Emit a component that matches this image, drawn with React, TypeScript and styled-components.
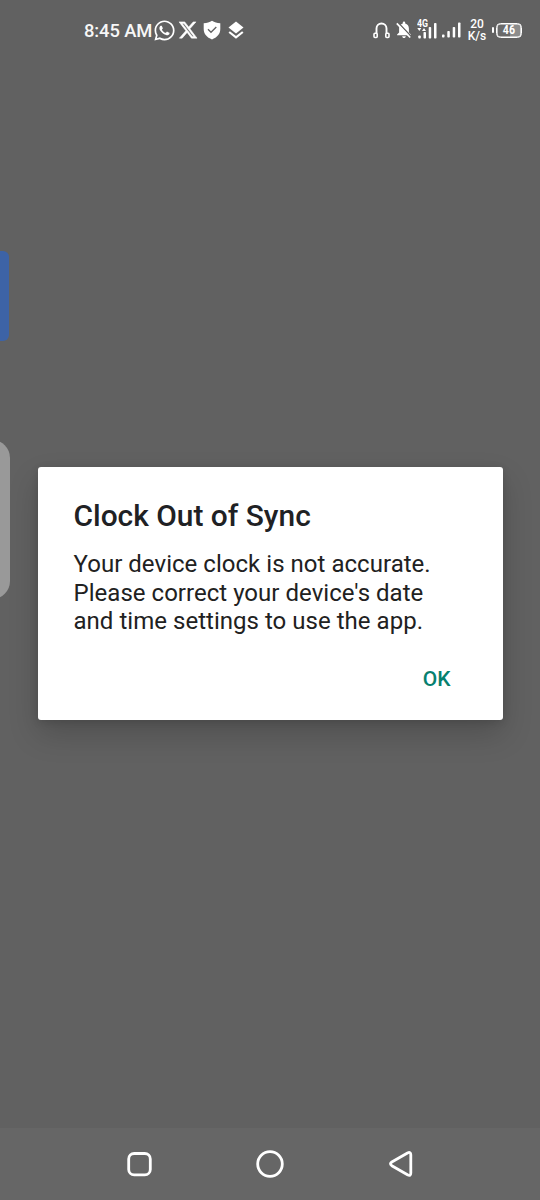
import React from "react";
import styled, { createGlobalStyle } from "styled-components";
import { FaWhatsapp } from "react-icons/fa";
import { FaXTwitter } from "react-icons/fa6";

const GlobalStyle = createGlobalStyle`
  body {
    margin: 0;
    background: #616161;
    font-family: Roboto, "Liberation Sans", sans-serif;
  }
`;

const Screen = styled.div`
  position: relative;
  display: flex;
  flex-direction: column;
  width: 540px;
  height: 1200px;
  overflow: hidden;
  background: #616161;
`;

const StatusBar = styled.header`
  display: flex;
  align-items: center;
  justify-content: space-between;
  box-sizing: border-box;
  height: 60px;
  padding: 0 18px 0 84px;
  color: #fff;
  svg {
    display: block;
    flex: none;
  }
`;

const StatusGroup = styled.div`
  display: flex;
  align-items: center;
`;

const Item = styled.span<{ $gap: number }>`
  display: flex;
  margin-left: ${({ $gap }) => $gap}px;
`;

const Time = styled.span`
  width: 70px;
  padding-top: 2px;
  font-size: 18.4px;
  font-weight: 500;
  line-height: 22px;
  letter-spacing: -0.1px;
  white-space: nowrap;
  color: #f7f7f7;
`;

const Signal = styled.div`
  display: flex;
  flex-direction: column;
  width: 21px;
  height: 21px;
  margin-left: 5px;
  margin-bottom: 3px;
`;

const NetworkType = styled.span`
  height: 4.5px;
  font-size: 10px;
  font-weight: 700;
  line-height: 11px;
  transform: scaleX(0.88);
  transform-origin: left;
`;

const Speed = styled.div`
  width: 22px;
  margin-left: 5px;
  font-size: 12px;
  font-weight: 500;
  line-height: 12px;
  text-align: center;
  white-space: nowrap;
`;

const Battery = styled.div`
  display: flex;
  align-items: center;
  margin-left: 4px;
`;

const BatteryTip = styled.span`
  width: 2px;
  height: 6px;
  margin-right: 2px;
  border-radius: 1px;
  background: #fff;
`;

const BatteryBody = styled.span`
  display: flex;
  align-items: center;
  justify-content: center;
  box-sizing: border-box;
  width: 26px;
  height: 15px;
  border: 1px solid #fff;
  border-radius: 4.5px;
  background: linear-gradient(90deg, #6a6a6a 54%, #8c8c8c 54%);
  box-shadow: inset 0 0 0 0.6px #fff;
`;

const BatteryLevel = styled.span`
  font-size: 12px;
  font-weight: 700;
  line-height: 12px;
  transform: scaleX(0.88);
`;

const Content = styled.main`
  flex: 1;
  display: flex;
  align-items: flex-start;
  justify-content: center;
  padding-top: 407px;
`;

const Dialog = styled.section`
  display: flex;
  flex-direction: column;
  box-sizing: border-box;
  width: 465px;
  height: 253px;
  padding: 31px 36px 0;
  border-radius: 3px;
  background: #fff;
  box-shadow: 0 14px 30px rgba(0, 0, 0, 0.18), 0 2px 8px rgba(0, 0, 0, 0.12);
`;

const Title = styled.h1`
  margin: 0;
  font-size: 29.9px;
  font-weight: 500;
  line-height: 36px;
  color: #202124;
  white-space: nowrap;
`;

const Message = styled.p`
  margin: 16px 0 0;
  font-size: 24px;
  line-height: 28.5px;
  letter-spacing: 0.03px;
  color: #212121;
  white-space: nowrap;
`;

const Actions = styled.div`
  display: flex;
  justify-content: flex-end;
  margin-top: 25px;
  padding-right: 16px;
`;

const ActionButton = styled.button`
  padding: 0;
  border: 0;
  background: none;
  font: 500 21px/36px Roboto, "Liberation Sans", sans-serif;
  color: #07806f;
`;

const NavBar = styled.nav`
  display: flex;
  align-items: center;
  justify-content: space-between;
  box-sizing: border-box;
  height: 72px;
  padding: 0 124px;
  background: #666;
`;

const EdgeHandle = styled.div<{ $top: number; $width: number; $height: number; $radius: number; $color: string }>`
  position: absolute;
  left: -20px;
  top: ${({ $top }) => $top}px;
  width: ${({ $width }) => $width + 20}px;
  height: ${({ $height }) => $height}px;
  border-radius: ${({ $radius }) => `0 ${$radius}px ${$radius}px 0`};
  background: ${({ $color }) => $color};
`;

const ShieldIcon = () => (
  <svg width="18" height="20" viewBox="0 0 18 20">
    <path d="M9 .7C11.5 2.5 14 3 17.3 3.2V9c0 5-3.2 8.4-8.3 10.4C3.9 17.4.7 14 .7 9V3.2C4 3 6.5 2.5 9 .7Z" fill="#fff" />
    <path d="m5 9.300 3 3 5.300-5.300" fill="none" stroke="#616161" strokeWidth="1.300" />
  </svg>
);

const LayersIcon = () => (
  <svg width="16" height="18" viewBox="0 0 16 18">
    <path d="M8 .5 15.500 6.600 8 12.500.5 6.600Z" fill="#fff" />
    <path d="m1.200 11 6.800 5.300 6.800-5.300" fill="none" stroke="#fff" strokeWidth="2.200" />
  </svg>
);

const HeadphonesIcon = () => (
  <svg width="17" height="17" viewBox="0 0 17 17" fill="none" stroke="#fff">
    <path d="M3.500 11.500V6.500a5 5 0 0 1 10 0v5" strokeWidth="1.900" />
    <rect x="1" y="11.200" width="3.200" height="4.300" rx="1" strokeWidth="1.600" />
    <rect x="12.800" y="11.200" width="3.200" height="4.300" rx="1" strokeWidth="1.600" />
  </svg>
);

const BellOffIcon = () => (
  <svg width="16" height="18" viewBox="0 0 16 18">
    <path d="M6.800 2.500V1.600a1.200 1.200 0 0 1 2.400 0v.9c2.300.6 3.700 2.500 3.700 5v4l2 2v.8H1.100v-.8l2-2v-4c0-2.500 1.400-4.400 3.700-5ZM6.200 15.200h3.600c0 2.400-3.600 2.400-3.600 0Z" fill="#fff" />
    <path d="m2 1.500 13.500 14.300" stroke="#616161" strokeWidth="1.500" />
    <path d="m.8 2.300 13.400 14.200" stroke="#fff" strokeWidth="1.700" />
  </svg>
);

const MobileSignal = () => (
  <svg width="21" height="16" viewBox="0 0 21 16" fill="#fff">
    <path d="M.3 5 2.300 8l2-3ZM5 8l2-3 2 3Z" />
    <rect x="1.300" y="12.500" width="2.500" height="3" rx=".8" />
    <rect x="6.500" y="9" width="2.500" height="6.500" rx=".8" />
    <rect x="11.700" y="4" width="2.500" height="11.500" rx=".8" />
    <rect x="17" y="0" width="2.500" height="15.500" rx=".8" />
  </svg>
);

const SignalBars = () => (
  <svg width="19" height="16" viewBox="0 0 19 16" fill="#fff">
    <rect x="0" y="12.500" width="2.500" height="3" rx=".8" />
    <rect x="5.300" y="9" width="2.500" height="6.500" rx=".8" />
    <rect x="10.700" y="5" width="2.500" height="10.500" rx=".8" />
    <rect x="16" y="0.500" width="2.500" height="15" rx=".8" />
  </svg>
);

export default function App() {
  return (
    <>
      <GlobalStyle />
      <Screen>
        <StatusBar>
          <StatusGroup>
            <Time>8:45 AM</Time>
            <Item $gap={-1}><FaWhatsapp size={23} /></Item>
            <Item $gap={2}><FaXTwitter size={20} stroke="#fff" strokeWidth={14} /></Item>
            <Item $gap={5}><ShieldIcon /></Item>
            <Item $gap={7}><LayersIcon /></Item>
          </StatusGroup>
          <StatusGroup>
            <Item $gap={0}><HeadphonesIcon /></Item>
            <Item $gap={6}><BellOffIcon /></Item>
            <Signal>
              <NetworkType>4G</NetworkType>
              <MobileSignal />
            </Signal>
            <Item $gap={4}><SignalBars /></Item>
            <Speed>20<br />K/s</Speed>
            <Battery>
              <BatteryTip />
              <BatteryBody><BatteryLevel>46</BatteryLevel></BatteryBody>
            </Battery>
          </StatusGroup>
        </StatusBar>
        <Content>
          <Dialog role="alertdialog">
            <Title>Clock Out of Sync</Title>
            <Message>
              Your device clock is not accurate.<br />
              Please correct your device's date<br />
              and time settings to use the app.
            </Message>
            <Actions><ActionButton>OK</ActionButton></Actions>
          </Dialog>
        </Content>
        <NavBar>
          <svg width="30" height="30" viewBox="0 0 30 30" fill="none" stroke="#fff" strokeWidth="2.800">
            <rect x="4.700" y="4.500" width="21.600" height="21.400" rx="5.500" />
          </svg>
          <svg width="30" height="30" viewBox="0 0 30 30" fill="none" stroke="#fff" strokeWidth="2.800">
            <circle cx="15" cy="15" r="12.300" />
          </svg>
          <svg width="30" height="30" viewBox="0 0 30 30" fill="none" stroke="#fff" strokeWidth="2.800" strokeLinejoin="round">
            <path d="M5.800 13 21.500 4q3.300-1.600 3.300 1.800v18.200q0 3.400-3.300 1.800L5.800 16.700q-2.700-1.900 0-3.700Z" />
          </svg>
        </NavBar>
        <EdgeHandle $top={251} $width={9} $height={90} $radius={6} $color="#3d63a6" />
        <EdgeHandle $top={440} $width={10} $height={159} $radius={18} $color="#999" />
      </Screen>
    </>
  );
}
